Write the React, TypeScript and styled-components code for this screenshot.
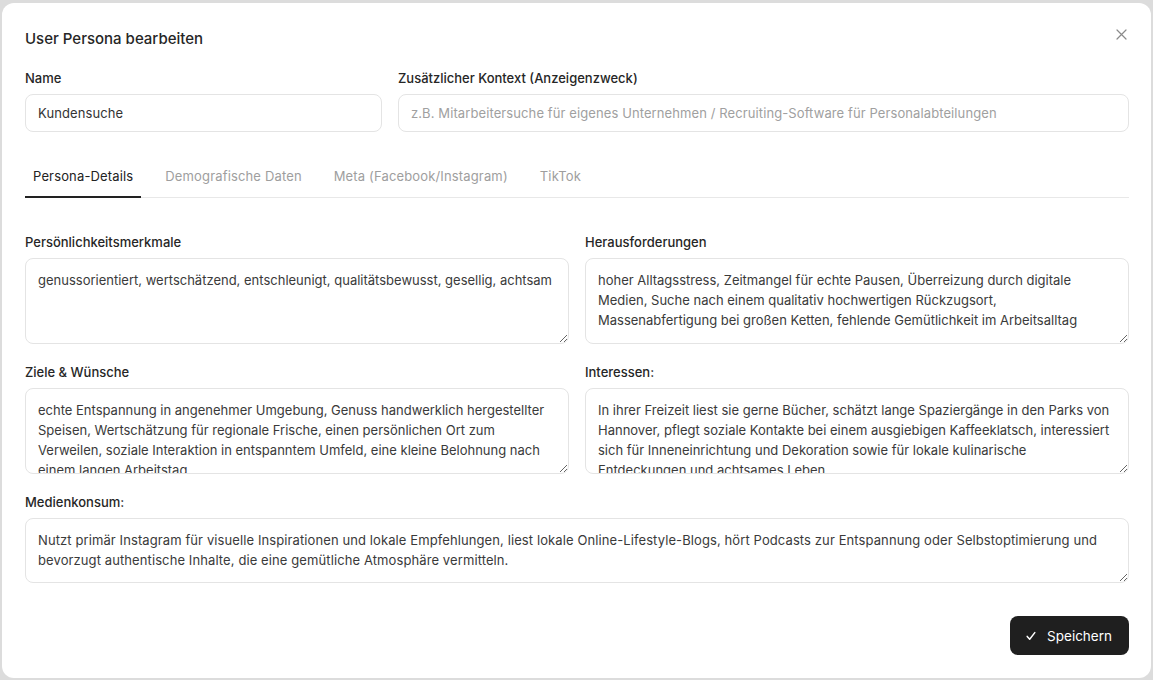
import React, { useState } from "react";
import styled, { createGlobalStyle } from "styled-components";

const Global = createGlobalStyle`
  html, body { margin: 0; padding: 0; }
  body {
    background: #dcdcdc;
    font-family: Inter, "Noto Sans", "Liberation Sans", sans-serif;
    -webkit-font-smoothing: antialiased;
  }
  * { box-sizing: border-box; }
`;

const Backdrop = styled.div`
  width: 1153px;
  height: 680px;
  padding: 3px 2px 2px 2px;
`;

const Dialog = styled.div`
  position: relative;
  height: 100%;
  background: #fff;
  border-radius: 12px;
  padding: 26px 22px 23px 23px;
  display: flex;
  flex-direction: column;
`;

const Title = styled.h2`
  margin: 0;
  font-size: 15px;
  line-height: 20px;
  font-weight: 500;
  color: #262626;
`;

const CloseButton = styled.button`
  position: absolute;
  top: 23px;
  right: 22px;
  width: 16px;
  height: 16px;
  padding: 0;
  border: none;
  background: none;
  display: flex;
  align-items: center;
  justify-content: center;
  cursor: pointer;
`;

const TopRow = styled.div`
  margin-top: 21px;
  display: grid;
  grid-template-columns: 357px 1fr;
  column-gap: 16px;
`;

const Field = styled.div`
  display: flex;
  flex-direction: column;
  gap: 8px;
  min-width: 0;
`;

const Label = styled.label`
  font-size: 13px;
  line-height: 16px;
  font-weight: 500;
  color: #262626;
`;

const TextInput = styled.input`
  height: 38px;
  width: 100%;
  border: 1px solid #e4e4e4;
  border-radius: 8px;
  padding: 0 12px;
  font-family: inherit;
  font-size: 13px;
  letter-spacing: 0.1px;
  color: #333;
  background: #fff;
  outline: none;
  &::placeholder { color: #a0a0a0; }
`;

const TabList = styled.div`
  margin-top: 28px;
  display: flex;
  gap: 16px;
  border-bottom: 1px solid #e8e8e8;
`;

const Tab = styled.button<{ $active?: boolean }>`
  border: none;
  background: none;
  padding: 8px 8px 12px;
  margin-bottom: -1px;
  font-family: inherit;
  font-size: 13px;
  line-height: 16px;
  letter-spacing: 0.15px;
  color: ${(p) => (p.$active ? "#222" : "#9e9e9e")};
  border-bottom: 2px solid ${(p) => (p.$active ? "#222" : "transparent")};
  cursor: pointer;
`;

const Grid = styled.div`
  margin-top: 36px;
  display: grid;
  grid-template-columns: 1fr 1fr;
  column-gap: 16px;
  row-gap: 20px;
`;

const Wide = styled(Field)`
  grid-column: 1 / -1;
`;

const Area = styled.textarea<{ $h: number; $loose?: boolean }>`
  width: 100%;
  height: ${(p) => p.$h}px;
  border: 1px solid #e4e4e4;
  border-radius: 8px;
  padding: 11px 12px;
  font-family: inherit;
  font-size: 13px;
  line-height: 20px;
  letter-spacing: ${(p) => (p.$loose ? "0.1px" : "normal")};
  color: #3a3a3a;
  background: #fff;
  resize: vertical;
  overflow: hidden;
  outline: none;
`;

const Footer = styled.div`
  margin-top: auto;
  display: flex;
  justify-content: flex-end;
`;

const SaveButton = styled.button`
  height: 39px;
  padding: 0 17px 0 16px;
  border: none;
  border-radius: 8px;
  background: #1f1f1f;
  color: #fff;
  font-family: inherit;
  font-size: 13.5px;
  display: flex;
  align-items: center;
  gap: 11px;
  cursor: pointer;
`;

const tabs = ["Persona-Details", "Demografische Daten", "Meta (Facebook/Instagram)", "TikTok"];

const fields = [
  {
    label: "Persönlichkeitsmerkmale",
    value: "genussorientiert, wertschätzend, entschleunigt, qualitätsbewusst, gesellig, achtsam",
  },
  {
    label: "Herausforderungen",
    value:
      "hoher Alltagsstress, Zeitmangel für echte Pausen, Überreizung durch digitale Medien, Suche nach einem qualitativ hochwertigen Rückzugsort, Massenabfertigung bei großen Ketten, fehlende Gemütlichkeit im Arbeitsalltag",
  },
  {
    label: "Ziele & Wünsche",
    value:
      "echte Entspannung in angenehmer Umgebung, Genuss handwerklich hergestellter Speisen, Wertschätzung für regionale Frische, einen persönlichen Ort zum Verweilen, soziale Interaktion in entspanntem Umfeld, eine kleine Belohnung nach einem langen Arbeitstag",
  },
  {
    label: "Interessen:",
    value:
      "In ihrer Freizeit liest sie gerne Bücher, schätzt lange Spaziergänge in den Parks von Hannover, pflegt soziale Kontakte bei einem ausgiebigen Kaffeeklatsch, interessiert sich für Inneneinrichtung und Dekoration sowie für lokale kulinarische Entdeckungen und achtsames Leben",
  },
];

const media =
  "Nutzt primär Instagram für visuelle Inspirationen und lokale Empfehlungen, liest lokale Online-Lifestyle-Blogs, hört Podcasts zur Entspannung oder Selbstoptimierung und bevorzugt authentische Inhalte, die eine gemütliche Atmosphäre vermitteln.";

export default function App() {
  const [active, setActive] = useState(0);
  return (
    <>
      <Global />
      <Backdrop>
        <Dialog>
          <Title>User Persona bearbeiten</Title>
          <CloseButton aria-label="Schließen">
            <svg width="11" height="11" viewBox="0 0 11 11" fill="none" stroke="#8a8a8a" strokeWidth="1.2" strokeLinecap="round">
              <path d="M1 1l9 9M10 1L1 10" />
            </svg>
          </CloseButton>

          <TopRow>
            <Field>
              <Label>Name</Label>
              <TextInput defaultValue="Kundensuche" />
            </Field>
            <Field>
              <Label>Zusätzlicher Kontext (Anzeigenzweck)</Label>
              <TextInput placeholder="z.B. Mitarbeitersuche für eigenes Unternehmen / Recruiting-Software für Personalabteilungen" />
            </Field>
          </TopRow>

          <TabList>
            {tabs.map((t, i) => (
              <Tab key={t} $active={i === active} onClick={() => setActive(i)}>
                {t}
              </Tab>
            ))}
          </TabList>

          <Grid>
            {fields.map((f) => (
              <Field key={f.label}>
                <Label>{f.label}</Label>
                <Area $h={86} defaultValue={f.value} />
              </Field>
            ))}
            <Wide>
              <Label>Medienkonsum:</Label>
              <Area $h={65} $loose defaultValue={media} />
            </Wide>
          </Grid>

          <Footer>
            <SaveButton>
              <svg width="10" height="10" viewBox="0 0 10 10" fill="none" stroke="#fff" strokeWidth="1.5" strokeLinecap="round" strokeLinejoin="round">
                <path d="M1.2 5.4L3.7 8.2L8.8 1.6" />
              </svg>
              <span>Speichern</span>
            </SaveButton>
          </Footer>
        </Dialog>
      </Backdrop>
    </>
  );
}
